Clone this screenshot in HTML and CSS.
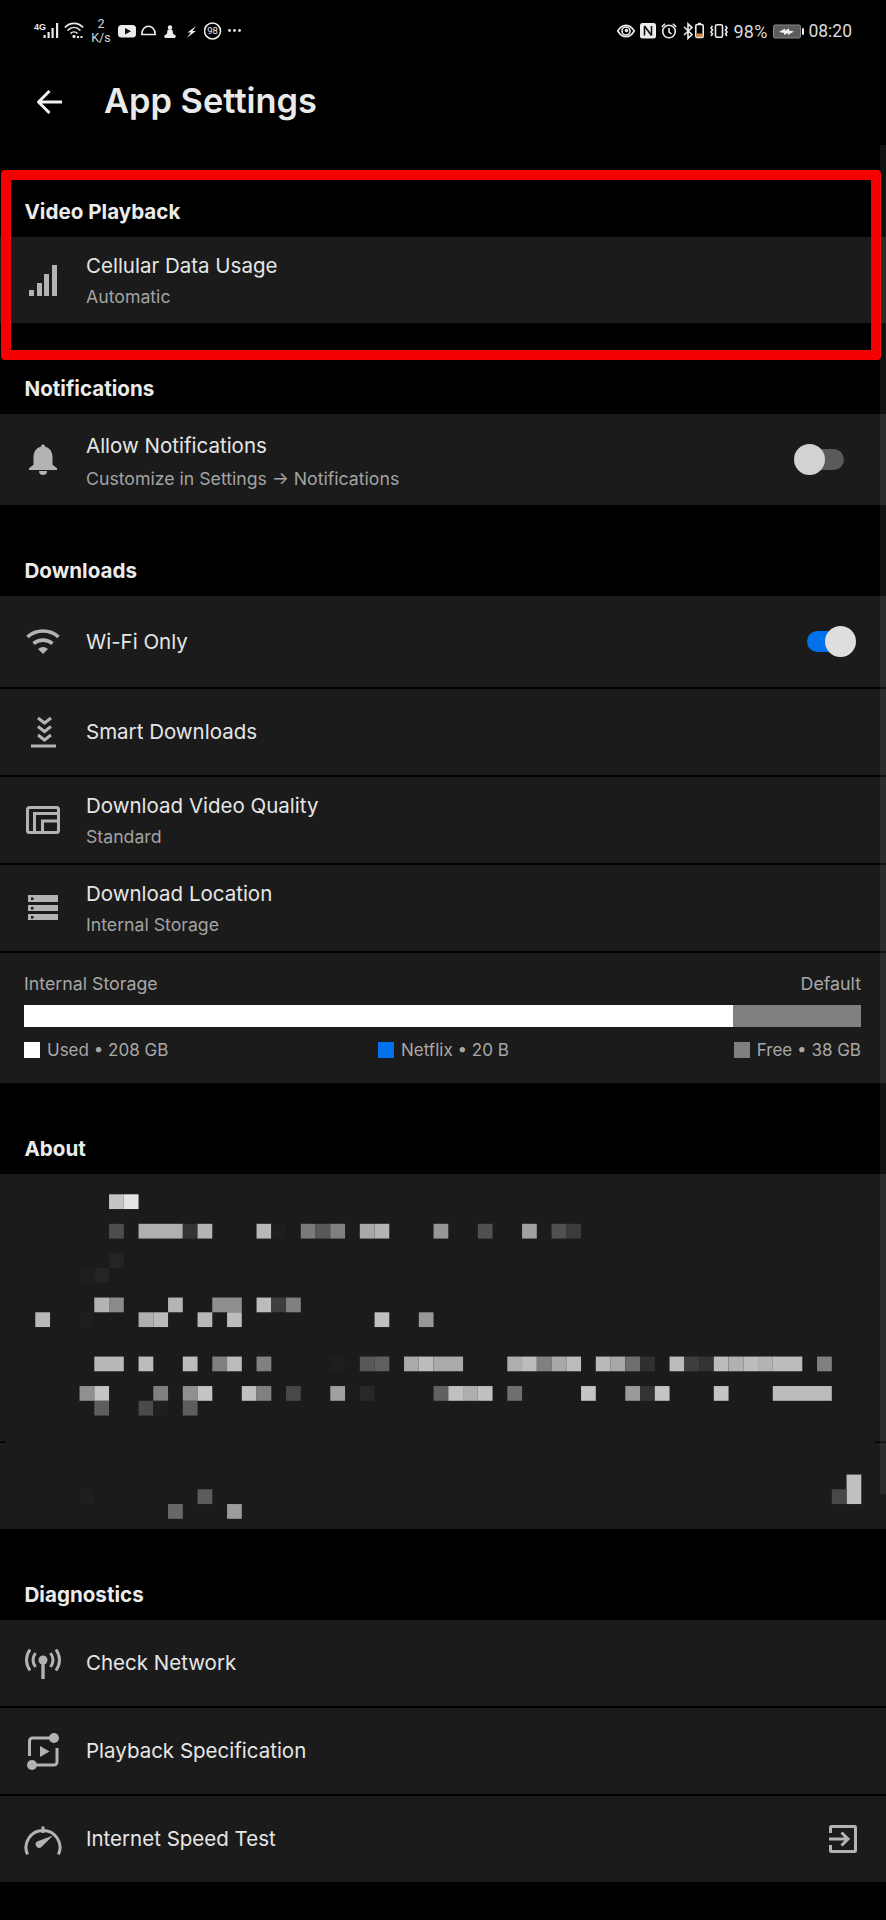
FILE: index.html
```html
<!DOCTYPE html>
<html lang="en">
<head>
    <meta charset="UTF-8">
    <meta name="viewport" content="width=device-width, initial-scale=1.0">
    <title>App Settings</title>
    <link rel="stylesheet" href="styles.css">
</head>
<body>
    <div class="page">
        <div class="status">
            <div class="status-left">
                <svg class="si" width="30" height="24" viewBox="0 0 30 24"><text x="0" y="10.5" class="tiny">4G</text><rect x="9.5" y="16" width="2.2" height="3"/><rect x="13.5" y="13" width="2.2" height="6"/><rect x="17.5" y="9" width="2.2" height="10"/><rect x="22" y="4" width="2.2" height="15"/></svg>
                <svg class="si" width="28" height="24" viewBox="0 0 28 24"><path class="ln" d="M.8 8.5C6 3 14 3 19.2 8.5M3.5 11.5C7.5 7.500 12.500 7.500 16.5 11.5M6.5 14.5C8.5 12.500 11.5 12.500 13.5 14.5"/><rect x="8.5" y="16" width="3" height="3" rx="1"/><rect x="13" y="17" width="2" height="2"/><rect x="16.5" y="17" width="2" height="2"/></svg>
                <div class="speed"><span>2</span><span>K/s</span></div>
                <svg class="si" width="23" height="24" viewBox="0 0 23 24"><rect x="0" y="6" width="18" height="12.5" rx="3.5"/><path class="cut" d="M7 9l6 3.2-6 3.2z"/></svg>
                <svg class="si" width="23" height="24" viewBox="0 0 23 24"><path class="ln" d="M.8 15.5C1 4.5 14 4.5 14.2 15.5z"/></svg>
                <svg class="si" width="22" height="24" viewBox="0 0 22 24"><circle cx="6" cy="8.5" r="2.2"/><path d="M3.500 11C5 10 7 10 8.500 11L9 14.500 12 17 11 19H1L0 17 3 14.500z"/></svg>
                <svg class="si" width="18" height="24" viewBox="0 0 18 24"><path d="M10 7L1.500 13.500H5L.5 19 10 12H6.500z"/></svg>
                <svg class="si" width="24" height="24" viewBox="0 0 24 24"><circle class="ln" cx="8.5" cy="12" r="8"/><text x="8.5" y="15.2" class="num">98</text></svg>
                <svg class="si" width="14" height="24" viewBox="0 0 14 24"><circle cx="1.5" cy="11.5" r="1.4"/><circle cx="6.5" cy="11.5" r="1.4"/><circle cx="11.5" cy="11.5" r="1.4"/></svg>
            </div>
            <div class="status-right">
                <svg class="si" width="23" height="24" viewBox="0 0 23 24"><path class="ln" d="M.8 12C5 4.5 13 4.5 17.2 12 13 19.5 5 19.5.8 12z"/><circle class="ln" cx="9" cy="12" r="4"/><circle cx="9.5" cy="11.5" r="1.8"/></svg>
                <svg class="si" width="21" height="24" viewBox="0 0 21 24"><rect x="0" y="4" width="16" height="15.5" rx="2.5"/><path class="cut-ln" d="M4.500 7v9.500M4.500 7l7 9.500M11.500 7v9.500"/></svg>
                <svg class="si" width="22" height="24" viewBox="0 0 22 24"><circle class="ln" cx="8" cy="12.5" r="6.3"/><path class="ln" d="M8 9v4l2.5 2M.8 8L4 4.800M15.200 8L12 4.800"/></svg>
                <svg class="si" width="12" height="24" viewBox="0 0 12 24"><path class="ln" d="M1 8l8 7.5-4 3.800V4.800l4 3.800L1 16"/></svg>
                <svg class="si" width="15" height="24" viewBox="0 0 15 24"><rect class="ln" x=".8" y="5.5" width="7.4" height="13" rx="1.5"/><rect x="3" y="3.800" width="3" height="1.5"/><rect class="orange" x="1.5" y="14.5" width="6" height="3.5"/></svg>
                <svg class="si" width="23" height="24" viewBox="0 0 23 24"><rect class="ln" x="5.5" y="5.800" width="7" height="12.500" rx="1.5"/><path class="ln" d="M2.5 7L1 9l1.500 2L1 13l1.500 2L1 17M15.500 7L17 9l-1.500 2 1.500 2-1.500 2 1.500 2"/></svg>
                <span class="pct">98%</span>
                <svg class="si" width="35" height="24" viewBox="0 0 35 24"><rect class="batt" x=".5" y="6" width="27" height="13" rx="1.5"/><rect x="29" y="9" width="2" height="7" rx="1"/><path class="cut-w" d="M6 13l6-3.500v2l4-2v2l5 1-6 3.500v-2l-4 2v-2z"/></svg>
                <span class="time">08:20</span>
            </div>
        </div>

        <div class="topbar">
            <svg class="back" width="25" height="24" viewBox="0 0 25 24"><path d="M25 12H2M12.5 1L1.5 12l11 11"/></svg>
            <h1>App Settings</h1>
        </div>

        <section>
            <h2>Video Playback</h2>
            <div class="row">
                <svg class="icon" width="38" height="38" viewBox="0 0 38 38"><rect x="5" y="29" width="5" height="6"/><rect x="13" y="22" width="5" height="13"/><rect x="20" y="13" width="5" height="22"/><rect x="28" y="4" width="5" height="31"/></svg>
                <div class="text two"><div class="name">Cellular Data Usage</div><div class="sub">Automatic</div></div>
            </div>
        </section>

        <section>
            <h2>Notifications</h2>
            <div class="row tall">
                <svg class="icon" width="38" height="38" viewBox="0 0 38 38"><path d="M19 3.5a2 2 0 0 1 2 2.200c5.5 1.200 7.5 5.500 7.500 11v7l4.500 3.600v1.700H5v-1.700l4.500-3.600v-7c0-5.500 2-9.800 7.500-11a2 2 0 0 1 2-2.200z"/><path d="M15 30h8a4 4 0 0 1-8 0z"/></svg>
                <div class="text two"><div class="name">Allow Notifications</div><div class="sub">Customize in Settings → Notifications</div></div>
                <div class="toggle"><span class="track"></span><span class="knob"></span></div>
            </div>
        </section>

        <section>
            <h2>Downloads</h2>
            <div class="row tall">
                <svg class="icon" width="38" height="38" viewBox="0 0 38 38"><path class="stroke thick" d="M3.5 14C12 6 26 6 34.5 14M9.5 20.5C15 16 23 16 28.5 20.5"/><path d="M14 26Q19 22 24 26L19 31z"/></svg>
                <div class="text"><div class="name">Wi-Fi Only</div></div>
                <div class="toggle on"><span class="track"></span><span class="knob"></span></div>
            </div>
            <div class="row">
                <svg class="icon" width="38" height="38" viewBox="0 0 38 38"><path class="stroke" d="M14 5l6.500 5L27 5M14 13.500l6.500 5 6.500-5M14 22l6.500 5 6.500-5"/><rect x="7" y="31.5" width="25" height="3"/></svg>
                <div class="text"><div class="name">Smart Downloads</div></div>
            </div>
            <div class="row">
                <svg class="icon" width="38" height="38" viewBox="0 0 38 38"><rect class="stroke" x="3.5" y="6.5" width="31" height="25" rx="2"/><path class="stroke" d="M10.5 31V12.5H35M18.5 31V20H35"/></svg>
                <div class="text two"><div class="name">Download Video Quality</div><div class="sub">Standard</div></div>
            </div>
            <div class="row">
                <svg class="icon" width="38" height="38" viewBox="0 0 38 38"><rect x="4" y="6" width="30" height="7"/><rect x="4" y="16" width="30" height="6"/><rect x="4" y="25" width="30" height="6"/><rect class="hole" x="7" y="8.5" width="2.5" height="2.5"/><rect class="hole" x="7" y="18" width="2.5" height="2.5"/><rect class="hole" x="7" y="27" width="2.5" height="2.5"/></svg>
                <div class="text two"><div class="name">Download Location</div><div class="sub">Internal Storage</div></div>
            </div>
            <div class="storage">
                <div class="storage-head"><span>Internal Storage</span><span>Default</span></div>
                <div class="bar"><div class="bar-used" style="width: 84.7%"></div></div>
                <div class="legend">
                    <div class="key"><span class="swatch white"></span>Used • 208 GB</div>
                    <div class="key"><span class="swatch blue"></span>Netflix • 20 B</div>
                    <div class="key"><span class="swatch grey"></span>Free • 38 GB</div>
                </div>
            </div>
        </section>

        <section>
            <h2>About</h2>
            <svg class="mosaic" width="886" height="355" viewBox="0 0 886 355">
                <rect x="0" y="267.5" width="6" height="1.5" fill="#000"/>
                <rect x="875" y="267.5" width="11" height="1.5" fill="#000"/>
                <g transform="translate(5.8 20.3) scale(14.75)">
                    <rect x="7" y="0" width="1" height="1" fill="#c4c4c4"/><rect x="8" y="0" width="1" height="1" fill="#e4e4e4"/>
                    <rect x="7" y="2" width="1" height="1" fill="#4d4d4d"/><rect x="9" y="2" width="3" height="1" fill="#b0b0b0"/><rect x="12" y="2" width="1" height="1" fill="#333"/><rect x="13" y="2" width="1" height="1" fill="#b4b4b4"/><rect x="17" y="2" width="1" height="1" fill="#b8b8b8"/><rect x="18" y="2" width="1" height="1" fill="#1e1e1e"/><rect x="20" y="2" width="1" height="1" fill="#7a7a7a"/><rect x="21" y="2" width="1" height="1" fill="#585858"/><rect x="22" y="2" width="1" height="1" fill="#808080"/><rect x="24" y="2" width="1" height="1" fill="#a8a8a8"/><rect x="25" y="2" width="1" height="1" fill="#b4b4b4"/><rect x="29" y="2" width="1" height="1" fill="#969696"/><rect x="32" y="2" width="1" height="1" fill="#505050"/><rect x="35" y="2" width="1" height="1" fill="#a0a0a0"/><rect x="37" y="2" width="1" height="1" fill="#505050"/><rect x="38" y="2" width="1" height="1" fill="#3c3c3c"/>
                    <rect x="7" y="4" width="1" height="1" fill="#242424"/><rect x="5" y="5" width="1" height="1" fill="#1e1e1e"/><rect x="6" y="5" width="1" height="1" fill="#242424"/>
                    <rect x="6" y="7" width="1" height="1" fill="#b4b4b4"/><rect x="7" y="7" width="1" height="1" fill="#8a8a8a"/><rect x="11" y="7" width="1" height="1" fill="#b4b4b4"/><rect x="14" y="7" width="2" height="1" fill="#8f8f8f"/><rect x="17" y="7" width="1" height="1" fill="#bcbcbc"/><rect x="18" y="7" width="1" height="1" fill="#3e3e3e"/><rect x="19" y="7" width="1" height="1" fill="#808080"/>
                    <rect x="2" y="8" width="1" height="1" fill="#b8b8b8"/><rect x="5" y="8" width="1" height="1" fill="#1e1e1e"/><rect x="9" y="8" width="1" height="1" fill="#b0b0b0"/><rect x="10" y="8" width="1" height="1" fill="#bbb"/><rect x="13" y="8" width="1" height="1" fill="#b8b8b8"/><rect x="15" y="8" width="1" height="1" fill="#bcbcbc"/><rect x="25" y="8" width="1" height="1" fill="#c0c0c0"/><rect x="28" y="8" width="1" height="1" fill="#989898"/>
                    <rect x="6" y="11" width="2" height="1" fill="#b8b8b8"/><rect x="9" y="11" width="1" height="1" fill="#bcbcbc"/><rect x="12" y="11" width="1" height="1" fill="#bcbcbc"/><rect x="14" y="11" width="1" height="1" fill="#808080"/><rect x="15" y="11" width="1" height="1" fill="#bcbcbc"/><rect x="17" y="11" width="1" height="1" fill="#808080"/><rect x="22" y="11" width="1" height="1" fill="#1e1e1e"/><rect x="24" y="11" width="1" height="1" fill="#585858"/><rect x="25" y="11" width="1" height="1" fill="#606060"/><rect x="27" y="11" width="1" height="1" fill="#aaa"/><rect x="28" y="11" width="1" height="1" fill="#bcbcbc"/><rect x="29" y="11" width="2" height="1" fill="#aaa"/><rect x="34" y="11" width="1" height="1" fill="#aeaeae"/><rect x="35" y="11" width="1" height="1" fill="#bcbcbc"/><rect x="36" y="11" width="1" height="1" fill="#808080"/><rect x="37" y="11" width="1" height="1" fill="#a8a8a8"/><rect x="38" y="11" width="1" height="1" fill="#bcbcbc"/><rect x="40" y="11" width="1" height="1" fill="#bababa"/><rect x="41" y="11" width="1" height="1" fill="#a8a8a8"/><rect x="42" y="11" width="1" height="1" fill="#6e6e6e"/><rect x="43" y="11" width="1" height="1" fill="#303030"/><rect x="45" y="11" width="1" height="1" fill="#bcbcbc"/><rect x="46" y="11" width="1" height="1" fill="#3e3e3e"/><rect x="47" y="11" width="1" height="1" fill="#333"/><rect x="48" y="11" width="1" height="1" fill="#bcbcbc"/><rect x="49" y="11" width="1" height="1" fill="#b0b0b0"/><rect x="50" y="11" width="1" height="1" fill="#bcbcbc"/><rect x="51" y="11" width="1" height="1" fill="#b4b4b4"/><rect x="52" y="11" width="2" height="1" fill="#bcbcbc"/><rect x="55" y="11" width="1" height="1" fill="#808080"/>
                    <rect x="5" y="13" width="1" height="1" fill="#909090"/><rect x="6" y="13" width="1" height="1" fill="#c4c4c4"/><rect x="10" y="13" width="1" height="1" fill="#808080"/><rect x="12" y="13" width="1" height="1" fill="#909090"/><rect x="13" y="13" width="1" height="1" fill="#c4c4c4"/><rect x="16" y="13" width="1" height="1" fill="#c0c0c0"/><rect x="17" y="13" width="1" height="1" fill="#808080"/><rect x="19" y="13" width="1" height="1" fill="#484848"/><rect x="22" y="13" width="1" height="1" fill="#a0a0a0"/><rect x="24" y="13" width="1" height="1" fill="#282828"/><rect x="29" y="13" width="1" height="1" fill="#606060"/><rect x="30" y="13" width="1" height="1" fill="#c0c0c0"/><rect x="31" y="13" width="1" height="1" fill="#aeaeae"/><rect x="32" y="13" width="1" height="1" fill="#c0c0c0"/><rect x="34" y="13" width="1" height="1" fill="#707070"/><rect x="39" y="13" width="1" height="1" fill="#c4c4c4"/><rect x="42" y="13" width="1" height="1" fill="#9a9a9a"/><rect x="43" y="13" width="1" height="1" fill="#333"/><rect x="44" y="13" width="1" height="1" fill="#c4c4c4"/><rect x="48" y="13" width="1" height="1" fill="#c4c4c4"/><rect x="52" y="13" width="4" height="1" fill="#bcbcbc"/>
                    <rect x="6" y="14" width="1" height="1" fill="#5e5e5e"/><rect x="9" y="14" width="1" height="1" fill="#4a4a4a"/><rect x="10" y="14" width="1" height="1" fill="#1f1f1f"/><rect x="12" y="14" width="1" height="1" fill="#5e5e5e"/>
                    <rect x="57" y="19" width="1" height="2" fill="#c0c0c0"/><rect x="13" y="20" width="1" height="1" fill="#5c5c5c"/><rect x="5" y="20" width="1" height="1" fill="#1e1e1e"/><rect x="56" y="20" width="1" height="1" fill="#484848"/>
                    <rect x="11" y="21" width="1" height="1" fill="#686868"/><rect x="15" y="21" width="1" height="1" fill="#9c9c9c"/>
                </g>
            </svg>
        </section>

        <section>
            <h2>Diagnostics</h2>
            <div class="row">
                <svg class="icon" width="38" height="38" viewBox="0 0 38 38"><circle cx="19" cy="16" r="4.5"/><rect x="17.3" y="18" width="3.4" height="17"/><path class="stroke" d="M11.5 9Q6.5 16 11.5 23M26.5 9Q31.5 16 26.5 23M6 5.5Q-1 16 6 26.5M32 5.5Q39 16 32 26.5"/></svg>
                <div class="text"><div class="name">Check Network</div></div>
            </div>
            <div class="row">
                <svg class="icon" width="38" height="38" viewBox="0 0 38 38"><circle cx="30" cy="6" r="5"/><circle cx="8" cy="33" r="5"/><path class="stroke" d="M30 6H8.5a3 3 0 0 0-3 3V24M8 33H30a3 3 0 0 0 3-3V16"/><path d="M16 14l9.500 5.500L16 25z"/></svg>
                <div class="text"><div class="name">Playback Specification</div></div>
            </div>
            <div class="row">
                <svg class="icon" width="38" height="38" viewBox="0 0 38 38"><path class="stroke" d="M3.5 34.5A17 17 0 1 1 34.5 34.5M19 6.5V13"/><path d="M13 21.5L29 15.5 17.5 27a3 3 0 0 1-4.500-5.500z"/></svg>
                <div class="text"><div class="name">Internet Speed Test</div></div>
                <svg class="exit" width="28" height="28" viewBox="0 0 28 28"><path class="stroke" d="M1.5 8V2.500a1 1 0 0 1 1-1H25.500a1 1 0 0 1 1 1V25.500a1 1 0 0 1-1 1H2.500a1 1 0 0 1-1-1V20M0 14H19M12.500 7.500L19 14l-6.500 6.500"/></svg>
            </div>
        </section>

        <div class="highlight"></div>
        <div class="scrollbar"></div>
    </div>
</body>
</html>
```

FILE: styles.css
```css
body {
    margin: 0;
    background: #000;
    color: #e6e6e6;
    font-family: Inter, "Noto Sans", sans-serif;
}
.page {
    position: relative;
    width: 886px;
    min-height: 1920px;
    overflow: hidden;
}

/* status bar */
.status {
    height: 62px;
    padding: 0 34px;
    display: flex;
    align-items: center;
    justify-content: space-between;
    box-sizing: border-box;
}
.status-left, .status-right {
    display: flex;
    align-items: center;
}
.si {
    display: block;
    fill: #ececec;
}
.si .ln {
    fill: none;
    stroke: #ececec;
    stroke-width: 1.6;
}
.si .cut {
    fill: #111;
}
.si .cut-ln {
    fill: none;
    stroke: #111;
    stroke-width: 1.6;
}
.si .cut-w {
    fill: #eee;
}
.si .batt {
    fill: #5c5c5c;
    stroke: #8a8a8a;
}
.si .orange {
    fill: #d98a3a;
}
.tiny {
    font-family: "Liberation Sans", sans-serif;
    font-size: 9px;
    font-weight: 700;
}
.num {
    font-family: Roboto, sans-serif;
    font-size: 9.5px;
    text-anchor: middle;
}
.speed {
    width: 18px;
    margin-right: 8px;
    display: flex;
    flex-direction: column;
    align-items: center;
    font-family: Roboto, sans-serif;
    font-size: 12.5px;
    line-height: 14px;
    color: #d8d8d8;
}
.pct, .time {
    font-family: Roboto, sans-serif;
    font-size: 17.5px;
    color: #dcdcdc;
}
.pct {
    width: 40px;
    font-size: 18px;
    letter-spacing: 0.3px;
}

/* title */
.topbar {
    height: 84px;
    padding: 0 0 8px 37px;
    box-sizing: border-box;
    display: flex;
    align-items: center;
}
.back {
    fill: none;
    stroke: #f2f2f2;
    stroke-width: 3;
    margin: 4px 42px 0 0;
}
h1 {
    margin: 0;
    font-size: 34.4px;
    font-weight: 600;
    color: #eaeaea;
}

/* sections */
h2 {
    margin: 0;
    height: 91px;
    padding: 0 0 13px 24.5px;
    box-sizing: border-box;
    display: flex;
    align-items: flex-end;
    font-size: 20.6px;
    line-height: 24px;
    font-weight: 700;
    color: #ebebeb;
}
.row {
    height: 86px;
    margin-bottom: 2px;
    padding-left: 24px;
    background: #1b1b1b;
    display: flex;
    align-items: center;
}
.row:last-child {
    margin-bottom: 0;
}
.row.tall {
    height: 91px;
}
.icon {
    flex: none;
    margin-right: 24px;
    fill: #b3b3b3;
}
.stroke {
    fill: none;
    stroke: #b3b3b3;
    stroke-width: 3;
}
.stroke.thick {
    stroke-width: 3.6;
}
.hole {
    fill: #1b1b1b;
}
.text {
    flex: 1;
}
.text.two {
    padding-top: 2px;
}
.tall .text.two {
    padding-top: 5px;
}
.name {
    font-size: 20.5px;
    line-height: 24px;
    color: #e6e6e6;
}
.sub {
    margin-top: 8px;
    font-size: 17.7px;
    line-height: 22px;
    color: #a3a3a3;
}
.tall .sub {
    margin-top: 10px;
}

/* switches */
.toggle {
    position: relative;
    flex: none;
    width: 62px;
    height: 31px;
    margin-right: 30px;
}
.track {
    position: absolute;
    top: 5px;
    left: 6px;
    width: 44px;
    height: 21px;
    border-radius: 11px;
    background: #5a5a5a;
}
.knob {
    position: absolute;
    top: 0;
    left: 0;
    width: 31px;
    height: 31px;
    border-radius: 50%;
    background: #d2d2d2;
}
.toggle.on .track {
    left: 13px;
    background: #0071eb;
}
.toggle.on .knob {
    left: auto;
    right: 0;
    background: #dedede;
}
.exit {
    flex: none;
    margin-right: 29px;
}

/* storage */
.storage {
    height: 130px;
    padding: 0 25px 0 24px;
    box-sizing: border-box;
    background: #1b1b1b;
    font-size: 17px;
    color: #a8a8a8;
}
.storage-head {
    padding-top: 20px;
    height: 52px;
    box-sizing: border-box;
    display: flex;
    justify-content: space-between;
    font-size: 17.8px;
    line-height: 22px;
}
.bar {
    height: 22px;
    background: #808080;
}
.bar-used {
    height: 100%;
    background: #fff;
}
.legend {
    margin-top: 12px;
    display: grid;
    grid-template-columns: 354px 1fr auto;
    line-height: 22px;
}
.key {
    display: flex;
    align-items: center;
}
.swatch {
    width: 16px;
    height: 16px;
    margin-right: 7px;
}
.swatch.white {
    background: #fff;
}
.swatch.blue {
    background: #0071eb;
}
.swatch.grey {
    background: #808080;
}

/* about block, blurred in the capture */
.mosaic {
    display: block;
    background: #1b1b1b;
}

/* overlays */
.highlight {
    position: absolute;
    top: 170px;
    left: 1px;
    width: 880px;
    height: 190px;
    box-sizing: border-box;
    border: 10px solid #f50000;
    border-radius: 4px;
}
.scrollbar {
    position: absolute;
    top: 145px;
    left: 880px;
    width: 6px;
    height: 1349px;
    background: rgba(255, 255, 255, 0.07);
}
```
